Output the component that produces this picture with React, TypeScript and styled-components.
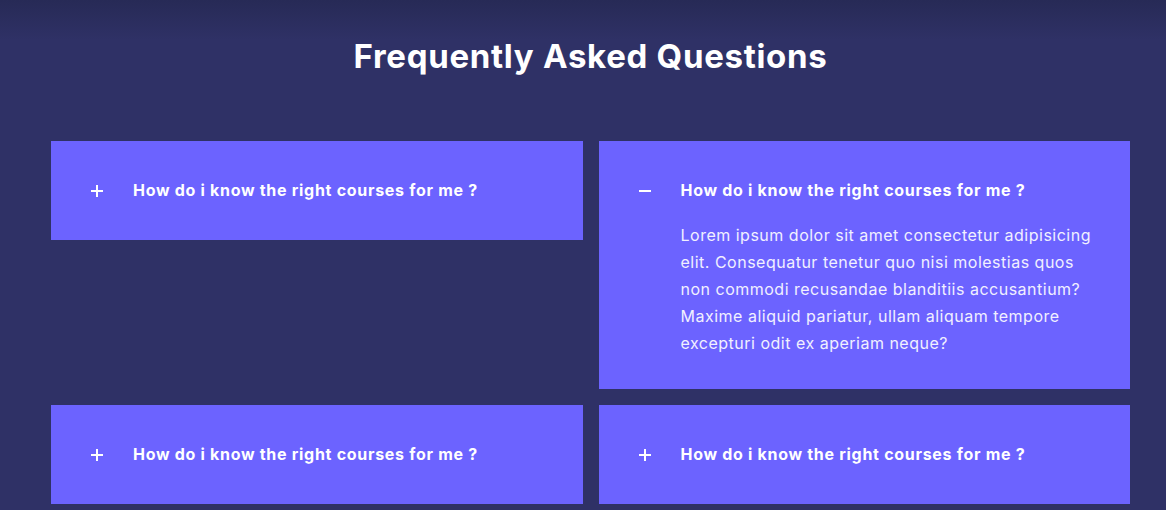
import React, { useState } from "react";
import styled, { createGlobalStyle } from "styled-components";

const Global = createGlobalStyle`
  html, body { margin: 0; padding: 0; }
  body {
    background: #2f3166;
    font-family: Inter, "Open Sans", sans-serif;
  }
`;

const Page = styled.section`
  min-height: 510px;
  background: linear-gradient(180deg, #272a56 0px, #2f3166 40px, #2f3166 100%);
  padding: 36px 36px 0 51px;
  box-sizing: border-box;
`;

const Title = styled.h2`
  margin: 0 0 65px;
  text-align: center;
  color: #ffffff;
  font-family: Inter, sans-serif;
  font-weight: 700;
  font-size: 33px;
  line-height: 40px;
  letter-spacing: 0.7px;
`;

const Grid = styled.div`
  display: grid;
  grid-template-columns: 1fr 1fr;
  gap: 16px;
  align-items: start;
`;

const Card = styled.div`
  background: #6c63ff;
  padding: 36px 20px 36px 38px;
`;

const Header = styled.button`
  all: unset;
  display: flex;
  align-items: center;
  gap: 28px;
  cursor: pointer;
  width: 100%;
`;

const Icon = styled.span`
  width: 16px;
  height: 27px;
  display: flex;
  align-items: center;
  justify-content: center;
  flex: none;
`;

const Question = styled.span`
  color: #ffffff;
  font-family: Inter, sans-serif;
  font-weight: 700;
  font-size: 16px;
  line-height: 27px;
  letter-spacing: 0.7px;
`;

const Answer = styled.p`
  margin: 18px 0 -4px 44px;
  color: #f1f0ff;
  font-family: Inter, sans-serif;
  font-size: 16px;
  line-height: 27px;
  letter-spacing: 0.5px;
  max-width: 418px;
`;

const Plus = ({ open }: { open: boolean }) => (
  <svg width="14" height="14" viewBox="0 0 14 14">
    <path d="M1 7H13" stroke="#fff" strokeWidth="2" />
    {!open && <path d="M7 1V13" stroke="#fff" strokeWidth="2" />}
  </svg>
);

const answer =
  "Lorem ipsum dolor sit amet consectetur adipisicing elit. Consequatur tenetur quo nisi molestias quos non commodi recusandae blanditiis accusantium? Maxime aliquid pariatur, ullam aliquam tempore excepturi odit ex aperiam neque?";

const FaqItem = ({ initial }: { initial: boolean }) => {
  const [open, setOpen] = useState(initial);
  return (
    <Card>
      <Header onClick={() => setOpen(!open)}>
        <Icon>
          <Plus open={open} />
        </Icon>
        <Question>How do i know the right courses for me ?</Question>
      </Header>
      {open && <Answer>{answer}</Answer>}
    </Card>
  );
};

export default function App() {
  return (
    <>
      <Global />
      <Page>
        <Title>Frequently Asked Questions</Title>
        <Grid>
          <FaqItem initial={false} />
          <FaqItem initial={true} />
          <FaqItem initial={false} />
          <FaqItem initial={false} />
        </Grid>
      </Page>
    </>
  );
}
